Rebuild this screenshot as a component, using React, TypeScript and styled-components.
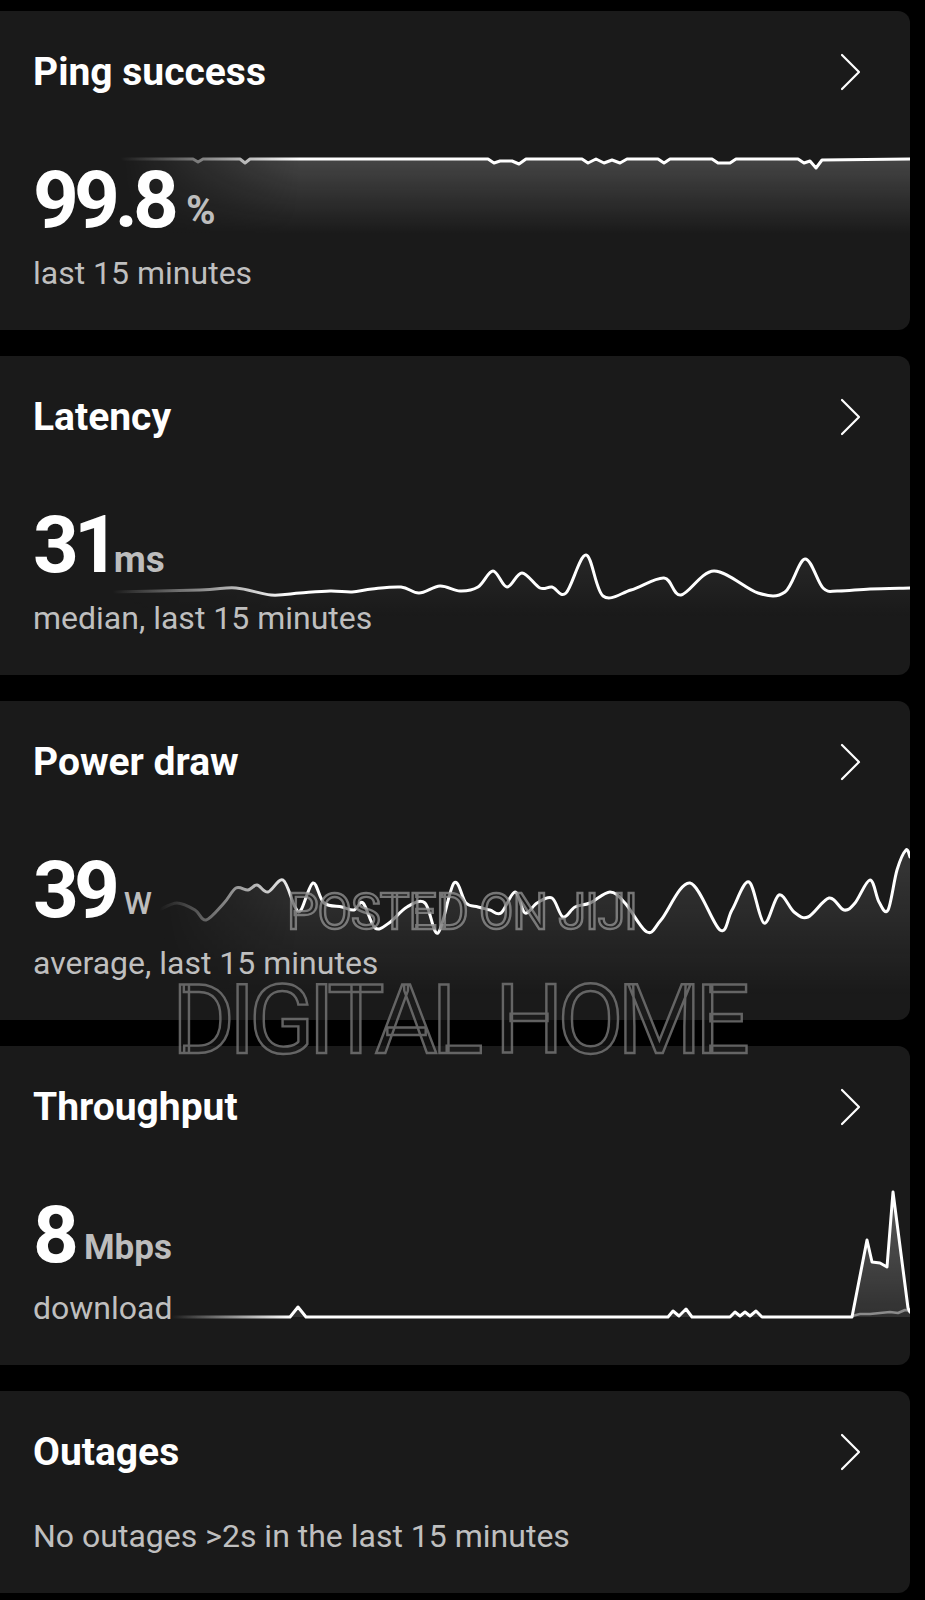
import React from 'react';
import styled, { createGlobalStyle } from 'styled-components';

const GlobalStyle = createGlobalStyle`
    html, body {
        margin: 0;
        padding: 0;
        background: #000;
    }
    body {
        font-family: Roboto, "Liberation Sans", Arial, sans-serif;
        -webkit-font-smoothing: antialiased;
    }
`;

type Pt = [number, number];

interface ChartSpec {
    id: string;
    line: Pt[];
    smooth?: boolean;
    fadeFrom: number;
    fadeTo: number;
    fillTop: number;
    fillBottom: number;
    fillOpacity: number;
    fillEndOpacity?: number;
    secondary?: Pt[];
}

const CARD_W = 910;
const CARD_H = 319;

// coordinates are relative to the top left corner of each card
const pingChart: ChartSpec = {
    id: 'ping',
    fadeFrom: 120,
    fadeTo: 300,
    fillTop: 148,
    fillBottom: 224,
    fillOpacity: 0.19,
    line: [
        [120, 148], [193, 148], [198, 151], [203, 148], [240, 148], [245, 152], [250, 148],
        [488, 148], [494, 152], [500, 150], [512, 150], [519, 153], [526, 148],
        [582, 148], [588, 152], [596, 148], [604, 152], [612, 149], [620, 152], [627, 148],
        [658, 148], [664, 152], [670, 148], [712, 148], [718, 152], [730, 152], [736, 148],
        [798, 148], [804, 152], [810, 150], [816, 157], [822, 149], [910, 148],
    ],
};

const latencyChart: ChartSpec = {
    id: 'latency',
    smooth: true,
    fadeFrom: 112,
    fadeTo: 290,
    fillTop: 200,
    fillBottom: 262,
    fillOpacity: 0.06,
    line: [
        [112, 236], [200, 234], [236, 232], [271, 239], [300, 237], [330, 235], [352, 236], [372, 233],
        [401, 231], [419, 237], [440, 230], [460, 235], [478, 231], [493, 215], [507, 231],
        [522, 217], [540, 232], [552, 231], [566, 237], [586, 199], [603, 240], [631, 234],
        [664, 222], [681, 239], [714, 215], [758, 237], [785, 236], [805, 203], [823, 232],
        [838, 235], [870, 233], [910, 232],
    ],
};

const powerChart: ChartSpec = {
    id: 'power',
    smooth: true,
    fadeFrom: 159,
    fadeTo: 300,
    fillTop: 170,
    fillBottom: 295,
    fillOpacity: 0.11,
    line: [
        [159, 209], [177, 202], [195, 209], [206, 219], [224, 202], [236, 187], [248, 189],
        [257, 184], [268, 191], [283, 179], [295, 206], [301, 209], [313, 182], [324, 202],
        [342, 206], [354, 209], [363, 202], [375, 227], [389, 222], [407, 206], [425, 202],
        [438, 232], [454, 182], [466, 202], [478, 206], [490, 209], [501, 212], [515, 191],
        [525, 212], [537, 202], [552, 197], [563, 216], [575, 206], [590, 202], [610, 191],
        [625, 202], [647, 231], [661, 219], [690, 182], [720, 229], [732, 209], [749, 181],
        [764, 222], [779, 194], [794, 211], [808, 216], [829, 197], [844, 209], [855, 202],
        [870, 179], [879, 201], [888, 209], [897, 169], [906, 149], [910, 156],
    ],
};

const throughputChart: ChartSpec = {
    id: 'throughput',
    fadeFrom: 171,
    fadeTo: 290,
    fillTop: 146,
    fillBottom: 271,
    fillOpacity: 0.28,
    fillEndOpacity: 0.1,
    line: [
        [171, 271], [290, 271], [294, 266], [298, 261], [302, 266], [306, 271],
        [668, 271], [673, 265], [679, 270], [686, 263], [692, 271],
        [730, 271], [735, 266], [740, 270], [745, 266], [750, 270], [756, 265], [762, 271],
        [852, 271], [867, 194], [872, 216], [880, 217], [887, 221], [893, 146], [908, 262], [910, 266],
    ],
    secondary: [
        [852, 270], [860, 268], [870, 268], [880, 267], [890, 266], [898, 267], [905, 264], [910, 265],
    ],
};

const r = (n: number) => Math.round(n * 10) / 10;

// straight segments, or a catmull-rom curve through the points
const linePath = (pts: Pt[], smooth?: boolean) => {
    let d = `M${pts[0][0]},${pts[0][1]}`;
    for (let i = 0; i < pts.length - 1; i++) {
        const p1 = pts[i];
        const p2 = pts[i + 1];
        if (!smooth) {
            d += ` L${p2[0]},${p2[1]}`;
            continue;
        }
        const p0 = pts[i - 1] ?? p1;
        const p3 = pts[i + 2] ?? p2;
        const c1x = p1[0] + (p2[0] - p0[0]) / 6;
        const c1y = p1[1] + (p2[1] - p0[1]) / 6;
        const c2x = p2[0] - (p3[0] - p1[0]) / 6;
        const c2y = p2[1] - (p3[1] - p1[1]) / 6;
        d += ` C${r(c1x)},${r(c1y)} ${r(c2x)},${r(c2y)} ${p2[0]},${p2[1]}`;
    }
    return d;
};

const Sparkline = ({ spec }: { spec: ChartSpec }) => {
    const first = spec.line[0];
    const last = spec.line[spec.line.length - 1];
    const line = linePath(spec.line, spec.smooth);
    const area = `${line} L${last[0]},${spec.fillBottom} L${first[0]},${spec.fillBottom} Z`;

    return (
        <ChartSvg width={CARD_W} height={CARD_H} viewBox={`0 0 ${CARD_W} ${CARD_H}`}>
            <defs>
                <linearGradient id={`${spec.id}-fade`} gradientUnits="userSpaceOnUse"
                    x1={spec.fadeFrom} x2={spec.fadeTo} y1="0" y2="0">
                    <stop offset="0" stopColor="#000" />
                    <stop offset="1" stopColor="#fff" />
                </linearGradient>
                <mask id={`${spec.id}-mask`} maskUnits="userSpaceOnUse" x="0" y="0" width={CARD_W} height={CARD_H}>
                    <rect width={CARD_W} height={CARD_H} fill={`url(#${spec.id}-fade)`} />
                </mask>
                <linearGradient id={`${spec.id}-fill`} gradientUnits="userSpaceOnUse"
                    x1="0" x2="0" y1={spec.fillTop} y2={spec.fillBottom}>
                    <stop offset="0" stopColor="#fff" stopOpacity={spec.fillOpacity} />
                    <stop offset="1" stopColor="#fff" stopOpacity={spec.fillEndOpacity ?? 0} />
                </linearGradient>
            </defs>
            <g mask={`url(#${spec.id}-mask)`}>
                <path d={area} fill={`url(#${spec.id}-fill)`} />
                {spec.secondary && (
                    <path d={linePath(spec.secondary)} fill="none" stroke="#8c8c8c"
                        strokeWidth={2.5} strokeLinejoin="round" strokeLinecap="round" />
                )}
                <path d={line} fill="none" stroke="#fff"
                    strokeWidth={3} strokeLinejoin="round" strokeLinecap="round" />
            </g>
        </ChartSvg>
    );
};

const Chevron = () => (
    <svg width="22" height="40" viewBox="0 0 22 40">
        <polyline points="3,3 20,20 3,37" fill="none" stroke="#fff" strokeWidth={2.2}
            strokeLinecap="round" strokeLinejoin="round" />
    </svg>
);

interface UnitStyle {
    $size: number;
    $gap: number;
    $lift: number;
    $weight?: number;
}

interface MetricProps {
    title: string;
    value: string;
    unit: string;
    unitStyle: UnitStyle;
    caption: string;
    chart: ChartSpec;
}

const MetricCard = ({ title, value, unit, unitStyle, caption, chart }: MetricProps) => (
    <Card>
        <Sparkline spec={chart} />
        <Content>
            <Header>
                <Title>{title}</Title>
                <Chevron />
            </Header>
            <ValueRow>
                <span>{value}</span>
                <Unit {...unitStyle}>{unit}</Unit>
            </ValueRow>
            <Caption $gap={15}>{caption}</Caption>
        </Content>
    </Card>
);

const App = () => (
    <>
        <GlobalStyle />
        <Page>
            <MetricCard
                title="Ping success"
                value="99.8"
                unit="%"
                unitStyle={{ $size: 40, $gap: 12, $lift: 3 }}
                caption="last 15 minutes"
                chart={pingChart}
            />
            <MetricCard
                title="Latency"
                value="31"
                unit="ms"
                unitStyle={{ $size: 37, $gap: -1, $lift: 0 }}
                caption="median, last 15 minutes"
                chart={latencyChart}
            />
            <MetricCard
                title="Power draw"
                value="39"
                unit="W"
                unitStyle={{ $size: 32, $gap: 9, $lift: 3, $weight: 500 }}
                caption="average, last 15 minutes"
                chart={powerChart}
            />
            <MetricCard
                title="Throughput"
                value="8"
                unit="Mbps"
                unitStyle={{ $size: 35, $gap: 10, $lift: 3 }}
                caption="download"
                chart={throughputChart}
            />
            <Card>
                <Content>
                    <Header>
                        <Title>Outages</Title>
                        <Chevron />
                    </Header>
                    <Caption $gap={44}>No outages &gt;2s in the last 15 minutes</Caption>
                </Content>
            </Card>
            <Watermark $size={50} $top={894} $left={287} $spacing={-1} $stroke="rgba(150,150,150,0.75)">
                POSTED ON JIJI
            </Watermark>
            <Watermark $size={96} $top={984} $left={172} $spacing={-6} $stroke="rgba(120,120,120,0.8)">
                DIGITAL HOME
            </Watermark>
        </Page>
    </>
);

const Page = styled.main`
    position: relative;
    display: flex;
    flex-direction: column;
    gap: 26px;
    padding: 11px 15px 7px 0;
    min-height: 1600px;
    box-sizing: border-box;
    overflow: hidden;
`;

const Card = styled.section`
    display: grid;
    width: 100%;
    background: #1a1a1a;
    border-radius: 0 12px 12px 0;
    overflow: hidden;

    & > * {
        grid-area: 1 / 1;
    }
`;

const ChartSvg = styled.svg`
    display: block;
    pointer-events: none;
`;

const Content = styled.div`
    display: flex;
    flex-direction: column;
    padding: 39px 49px 39px 33px;
`;

const Header = styled.div`
    display: flex;
    align-items: center;
    justify-content: space-between;
    height: 44px;
`;

const Title = styled.h2`
    margin: 0;
    font-size: 39px;
    line-height: 44px;
    font-weight: 700;
    color: #fff;
`;

const ValueRow = styled.div`
    margin-top: 66px;
    height: 80px;
    font-size: 80px;
    line-height: 80px;
    font-weight: 700;
    letter-spacing: -5px;
    color: #fff;
    white-space: nowrap;
`;

const Unit = styled.span<UnitStyle>`
    margin-left: ${p => p.$gap}px;
    font-size: ${p => p.$size}px;
    font-weight: ${p => p.$weight ?? 700};
    line-height: 1;
    letter-spacing: 0;
    vertical-align: ${p => p.$lift}px;
    color: #bdbdbd;
`;

const Caption = styled.p<{ $gap: number }>`
    margin: ${p => p.$gap}px 0 0;
    font-size: 32px;
    line-height: 36px;
    font-weight: 400;
    color: #bfbfbf;
`;

const Watermark = styled.div<{ $size: number; $top: number; $left: number; $spacing: number; $stroke: string }>`
    position: absolute;
    top: ${p => p.$top}px;
    left: ${p => p.$left}px;
    font-size: ${p => p.$size}px;
    line-height: 0.75;
    font-weight: 400;
    letter-spacing: ${p => p.$spacing}px;
    white-space: nowrap;
    color: rgba(30, 30, 30, 0.55);
    -webkit-text-stroke: 2.4px ${p => p.$stroke};
    pointer-events: none;
`;

export default App;
